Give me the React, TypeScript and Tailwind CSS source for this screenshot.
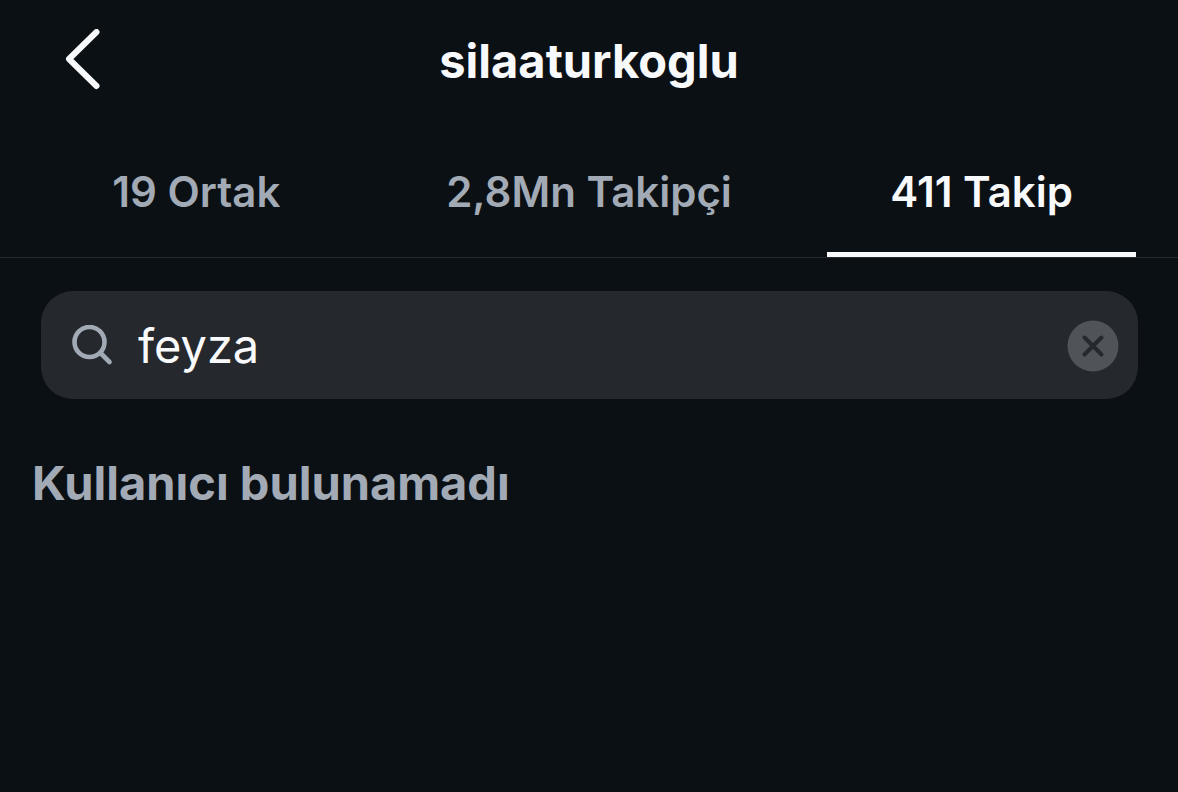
import React, { useState } from "react";
import clsx from "clsx";

interface Tab {
  id: string;
  label: string;
}

const TABS: Tab[] = [
  { id: "mutual", label: "19 Ortak" },
  { id: "followers", label: "2,8Mn Takipçi" },
  { id: "following", label: "411 Takip" },
];

const BackIcon: React.FC = () => (
  <svg width="40" height="64" viewBox="0 0 40 64" fill="none" aria-hidden="true">
    <path d="M32.5 3 L5 30 L32.5 57" stroke="currentColor" strokeWidth="6" strokeLinecap="round" strokeLinejoin="round" />
  </svg>
);

const SearchIcon: React.FC = () => (
  <svg width="42" height="42" viewBox="0 0 42 42" fill="none" aria-hidden="true">
    <circle cx="17.5" cy="17" r="15" stroke="currentColor" strokeWidth="4.6" />
    <path d="M28.5 28 L37.5 37" stroke="currentColor" strokeWidth="4.6" strokeLinecap="round" />
  </svg>
);

const ClearIcon: React.FC = () => (
  <svg width="52" height="52" viewBox="0 0 52 52" fill="none" aria-hidden="true">
    <circle cx="26" cy="26" r="25.5" fill="#505357" />
    <path d="M17.5 17.5 L34.5 34.5 M34.5 17.5 L17.5 34.5" stroke="#25282d" strokeWidth="4" strokeLinecap="round" />
  </svg>
);

export default function App() {
  const [activeTab, setActiveTab] = useState("following");
  const [query, setQuery] = useState("feyza");

  return (
    <div className="min-h-screen bg-[#0b1014] font-['Inter',sans-serif] text-[#f8f9fb]">
      <header className="grid h-32 grid-cols-[1fr_auto_1fr] items-center px-16 pb-1.5">
        <button type="button" aria-label="Geri" className="justify-self-start">
          <BackIcon />
        </button>
        <h1 className="text-[47px] leading-14 font-bold">silaaturkoglu</h1>
      </header>

      <nav role="tablist" className="grid h-[130px] grid-cols-3 border-b border-[#25292e]">
        {TABS.map(tab => (
          <button
            key={tab.id}
            type="button"
            role="tab"
            aria-selected={activeTab === tab.id}
            onClick={() => setActiveTab(tab.id)}
            className={clsx(
              "mx-[42px] border-b-5 pt-1 text-[42px] leading-14 font-semibold whitespace-nowrap",
              activeTab === tab.id ? "border-[#f8f9fb]" : "border-transparent text-[#a2aab6]"
            )}
          >
            {tab.label}
          </button>
        ))}
      </nav>

      <main className="pt-[33px]">
        <div className="mr-10 ml-[41px] flex h-[108px] items-center gap-6 rounded-[32px] bg-[#25282d] pt-0.5 pr-[19px] pl-[31px]">
          <label htmlFor="user-search" aria-label="Ara" className="shrink-0 text-[#a2aab6]">
            <SearchIcon />
          </label>
          <input
            id="user-search"
            type="text"
            value={query}
            onChange={e => setQuery(e.target.value)}
            className="min-w-0 flex-1 bg-transparent text-[47px] leading-14 outline-none"
          />
          <button type="button" aria-label="Temizle" onClick={() => setQuery("")} className="shrink-0">
            <ClearIcon />
          </button>
        </div>

        <p className="px-8 pt-14 text-[47px] leading-14 font-bold text-[#a2aab6]">Kullanıcı bulunamadı</p>
      </main>
    </div>
  );
}
